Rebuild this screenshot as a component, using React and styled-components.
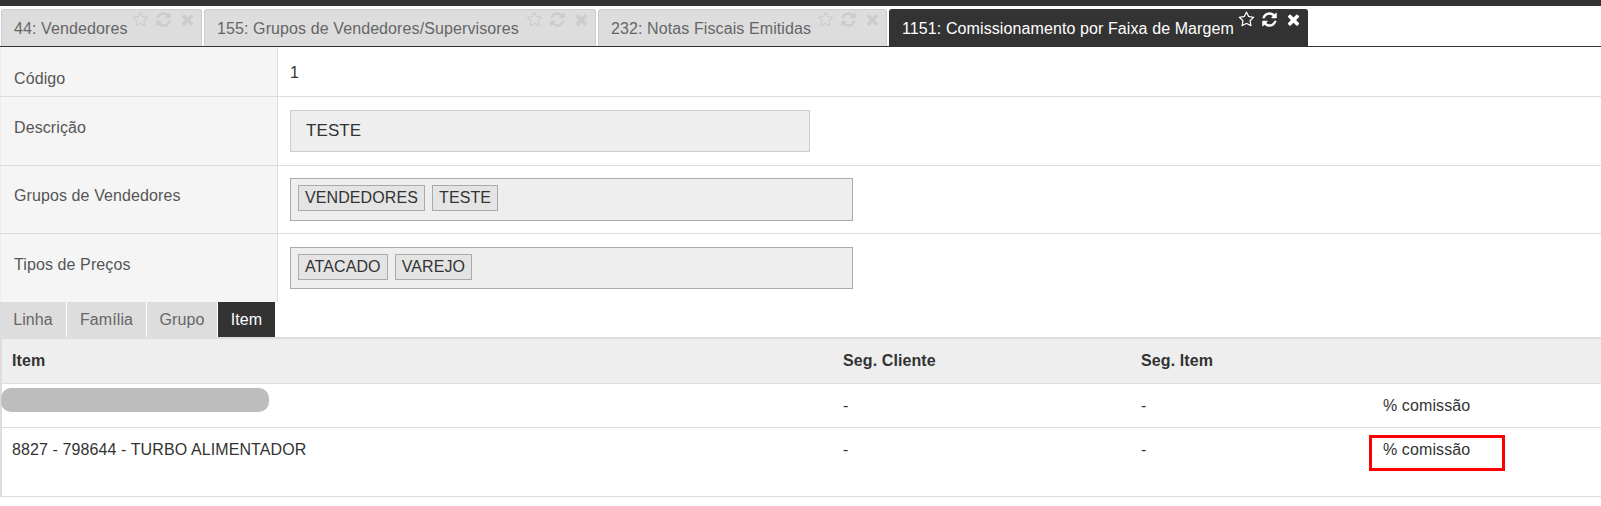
import React from 'react';
import styled, { createGlobalStyle } from 'styled-components';

const GlobalStyle = createGlobalStyle`
  html, body {
    margin: 0;
    padding: 0;
    background: #fff;
    color: #333;
    font-family: "Liberation Sans", Arial, sans-serif;
    font-size: 16px;
    letter-spacing: 0.1px;
  }
`;

const Page = styled.div`
  width: 1601px;
  height: 506px;
  overflow: hidden;
`;

const TopBar = styled.div`
  height: 6px;
  background: #333;
`;

const TabBar = styled.div`
  display: flex;
  height: 37px;
  margin-top: 3px;
  padding-left: 1px;
  gap: 2px;
  border-bottom: 1px solid #333;
`;

const Tab = styled.div`
  display: flex;
  box-sizing: border-box;
  width: ${props => props.width}px;
  height: 37px;
  padding: 0 5.5px 0 12px;
  border: 1px solid ${props => (props.active ? '#333' : '#ccc')};
  border-bottom: 0;
  border-radius: 3px 3px 0 0;
  background: ${props => (props.active ? '#333' : '#ddd')};
  color: ${props => (props.active ? '#fff' : '#666')};
`;

const TabTitle = styled.span`
  line-height: 37px;
  white-space: nowrap;
`;

const TabIcons = styled.div`
  display: flex;
  align-items: flex-start;
  gap: 6.5px;
  margin-left: auto;
  padding-top: 1px;
  color: ${props => (props.active ? '#fff' : '#ccc')};
`;

const IconSvg = styled.svg`
  width: 17px;
  height: 17px;
  fill: currentColor;
`;

const StarIcon = () => (
  <IconSvg viewBox="0 0 1792 1792">
    <path d="M1201 1004l306-297-422-62-189-382-189 382-422 62 306 297-73 421 378-199 377 199zm527-357q0 22-26 48l-363 354 86 500q1 7 1 20 0 50-41 50-19 0-40-12l-449-236-449 236q-22 12-40 12-21 0-31.5-14.5t-10.5-35.5q0-6 2-20l86-500-364-354q-25-27-25-48 0-37 56-46l502-73 225-455q19-41 49-41t49 41l225 455 502 73q56 9 56 46z" />
  </IconSvg>
);

const RefreshIcon = () => (
  <IconSvg viewBox="0 0 1792 1792">
    <path d="M1639 1056q0 5-1 7-64 268-268 434.5t-478 166.5q-146 0-282.5-55t-243.5-157l-129 129q-19 19-45 19t-45-19-19-45v-448q0-26 19-45t45-19h448q26 0 45 19t19 45-19 45l-137 137q71 66 161 102t187 36q134 0 250-65t186-179q11-17 53-117 8-23 30-23h192q13 0 22.5 9.5t9.5 22.5zm25-800v448q0 26-19 45t-45 19h-448q-26 0-45-19t-19-45 19-45l138-138q-148-137-349-137-134 0-250 65t-186 179q-11 17-53 117-8 23-30 23h-199q-13 0-22.5-9.5t-9.5-22.5v-7q65-268 270-434.5t480-166.5q146 0 284 55.5t245 156.5l130-129q19-19 45-19t45 19 19 45z" />
  </IconSvg>
);

const CloseIcon = () => (
  <IconSvg viewBox="0 0 1792 1792">
    <path d="M1490 1322q0 40-28 68l-136 136q-28 28-68 28t-68-28l-294-294-294 294q-28 28-68 28t-68-28l-136-136q-28-28-28-68t28-68l294-294-294-294q-28-28-28-68t28-68l136-136q28-28 68-28t68 28l294 294 294-294q28-28 68-28t68 28l136 136q28 28 28 68t-28 68l-294 294 294 294q28 28 28 68z" />
  </IconSvg>
);

const FormRow = styled.div`
  display: grid;
  grid-template-columns: 278px 1fr;
  box-sizing: border-box;
  height: ${props => props.height}px;
  border-bottom: ${props => (props.last ? 0 : '1px solid #ddd')};
`;

const FormLabel = styled.div`
  padding: ${props => props.top}px 0 0 13px;
  background: #f5f5f5;
  border-right: 1px solid #ddd;
  border-left: 1px solid #eee;
  color: #555;
`;

const FormValue = styled.div`
  padding: ${props => props.top}px 0 0 12px;
`;

const TextField = styled.div`
  box-sizing: border-box;
  display: flex;
  align-items: center;
  width: 520px;
  height: 42px;
  padding: 0 15px;
  background: #eee;
  border: 1px solid #ccc;
  font-size: 17px;
`;

const TagField = styled.div`
  box-sizing: border-box;
  display: flex;
  gap: 7px;
  width: 563px;
  height: ${props => props.height}px;
  padding: 6px 7px;
  background: #eee;
  border: 1px solid #aaa;
`;

const Tag = styled.span`
  box-sizing: border-box;
  height: 26px;
  padding: 0 6px;
  background: #e4e4e4;
  border: 1px solid #aaa;
  line-height: 24px;
`;

const SubTabs = styled.div`
  display: flex;
  gap: 1px;
  height: 35px;
  border-bottom: 2px solid #ddd;
`;

const SubTab = styled.div`
  box-sizing: border-box;
  width: ${props => props.width}px;
  height: 35px;
  background: ${props => (props.active ? '#333' : '#ddd')};
  color: ${props => (props.active ? '#fff' : '#666')};
  line-height: 35px;
  text-align: center;
`;

const Table = styled.div`
  border-left: 2px solid #ddd;
`;

const TableRow = styled.div`
  display: grid;
  grid-template-columns: 831px 298px 240px 1fr;
  box-sizing: border-box;
  height: ${props => props.height}px;
  border-bottom: 1px solid #ddd;
  background: ${props => (props.head ? '#eee' : '#fff')};
  font-weight: ${props => (props.head ? 700 : 400)};
`;

const Cell = styled.div`
  position: relative;
  padding: 13px 0 0 ${props => props.left || 10}px;
`;

const Blur = styled.div`
  width: 268px;
  height: 24px;
  margin: -9px 0 0 -11px;
  background: #bdbdbd;
  border-radius: 10px;
`;

const Highlight = styled.div`
  position: absolute;
  left: -2px;
  top: 7px;
  width: 136px;
  height: 36px;
  box-sizing: border-box;
  border: 3px solid #f00;
`;

const tabs = [
  { title: '44: Vendedores', width: 201 },
  { title: '155: Grupos de Vendedores/Supervisores', width: 392 },
  { title: '232: Notas Fiscais Emitidas', width: 289 },
  { title: '1151: Comissionamento por Faixa de Margem', width: 419, active: true },
];

const subTabs = [
  { title: 'Linha', width: 66 },
  { title: 'Família', width: 79 },
  { title: 'Grupo', width: 70 },
  { title: 'Item', width: 57, active: true },
];

export default function App() {
  return (
    <Page>
      <GlobalStyle />
      <TopBar />
      <TabBar>
        {tabs.map(tab => (
          <Tab key={tab.title} width={tab.width} active={tab.active}>
            <TabTitle>{tab.title}</TabTitle>
            <TabIcons active={tab.active}>
              <StarIcon />
              <RefreshIcon />
              <CloseIcon />
            </TabIcons>
          </Tab>
        ))}
      </TabBar>
      <FormRow height={50}>
        <FormLabel top={23}>Código</FormLabel>
        <FormValue top={17}>1</FormValue>
      </FormRow>
      <FormRow height={69}>
        <FormLabel top={22}>Descrição</FormLabel>
        <FormValue top={13}>
          <TextField>TESTE</TextField>
        </FormValue>
      </FormRow>
      <FormRow height={68}>
        <FormLabel top={21}>Grupos de Vendedores</FormLabel>
        <FormValue top={12}>
          <TagField height={43}>
            <Tag>VENDEDORES</Tag>
            <Tag>TESTE</Tag>
          </TagField>
        </FormValue>
      </FormRow>
      <FormRow height={68} last>
        <FormLabel top={22}>Tipos de Preços</FormLabel>
        <FormValue top={13}>
          <TagField height={42}>
            <Tag>ATACADO</Tag>
            <Tag>VAREJO</Tag>
          </TagField>
        </FormValue>
      </FormRow>
      <SubTabs>
        {subTabs.map(tab => (
          <SubTab key={tab.title} width={tab.width} active={tab.active}>{tab.title}</SubTab>
        ))}
      </SubTabs>
      <Table>
        <TableRow head height={45}>
          <Cell>Item</Cell>
          <Cell>Seg. Cliente</Cell>
          <Cell>Seg. Item</Cell>
          <Cell />
        </TableRow>
        <TableRow height={44}>
          <Cell><Blur /></Cell>
          <Cell>-</Cell>
          <Cell>-</Cell>
          <Cell left={12}>% comissão</Cell>
        </TableRow>
        <TableRow height={69}>
          <Cell>8827 - 798644 - TURBO ALIMENTADOR</Cell>
          <Cell>-</Cell>
          <Cell>-</Cell>
          <Cell left={12}>
            % comissão
            <Highlight />
          </Cell>
        </TableRow>
      </Table>
    </Page>
  );
}
